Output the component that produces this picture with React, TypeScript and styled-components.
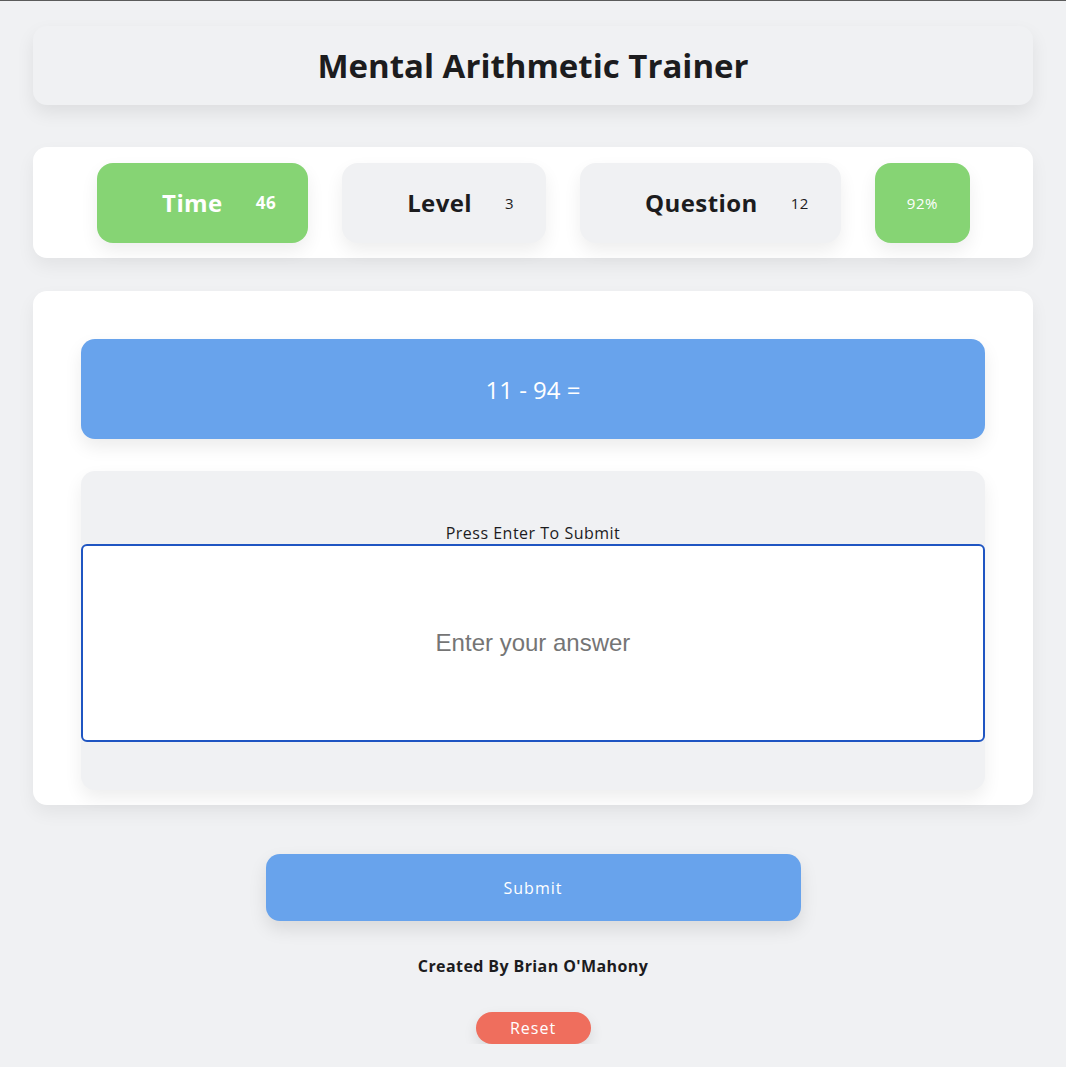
import React from 'react';
import styled, { createGlobalStyle, css } from 'styled-components';

const GlobalStyle = createGlobalStyle`
  html, body {
    margin: 0;
    padding: 0;
    background: #f0f1f3;
  }
  body {
    border-top: 1px solid #5b5b5b;
    font-family: "Open Sans", "Liberation Sans", sans-serif;
    color: #1c1c1e;
  }
  * { box-sizing: border-box; }
`;

const BLUE = '#68a3ec';
const GREEN = '#86d474';
const GREY = '#f0f1f3';

const Page = styled.div`
  display: flex;
  flex-direction: column;
  align-items: stretch;
  padding: 25px 33px 0;
`;

const Header = styled.header`
  height: 79px;
  background: ${GREY};
  border-radius: 14px;
  box-shadow: 0 8px 18px rgba(0, 0, 0, 0.08);
  display: flex;
  align-items: center;
  justify-content: center;

  h1 {
    margin: 0;
    font-size: 33px;
    font-weight: 700;
  }
`;

const Stats = styled.section`
  margin-top: 42px;
  height: 111px;
  background: #fff;
  border-radius: 14px;
  box-shadow: 0 8px 18px rgba(0, 0, 0, 0.06);
  display: flex;
  align-items: center;
  justify-content: center;
  gap: 34px;
  padding-left: 1px;
`;

const StatCard = styled.div<{ $green?: boolean }>`
  height: 80px;
  border-radius: 16px;
  padding: 0 32px;
  display: flex;
  align-items: center;
  background: ${(p) => (p.$green ? GREEN : GREY)};
  color: ${(p) => (p.$green ? '#fff' : '#1c1c1e')};
  box-shadow: 0 8px 18px rgba(0, 0, 0, 0.07);
`;

const StatLabel = styled.span`
  margin: 0 33px;
  font-size: 24px;
  font-weight: 700;
  letter-spacing: 0.4px;
`;

const StatValue = styled.span<{ $bold?: boolean }>`
  font-size: 15px;
  letter-spacing: 0.5px;
  ${(p) =>
    p.$bold &&
    css`
      font-weight: 700;
      font-size: 17px;
    `}
`;

const MainCard = styled.main`
  margin-top: 33px;
  background: #fff;
  border-radius: 14px;
  box-shadow: 0 8px 18px rgba(0, 0, 0, 0.06);
  padding: 48px 48px 15px;
  display: flex;
  flex-direction: column;
  gap: 32px;
`;

const QuestionBox = styled.div`
  height: 100px;
  border-radius: 14px;
  background: ${BLUE};
  color: #fff;
  font-size: 24px;
  display: flex;
  align-items: center;
  justify-content: center;
  box-shadow: 0 8px 18px rgba(0, 0, 0, 0.08);
`;

const AnswerBox = styled.div`
  background: ${GREY};
  border-radius: 14px;
  box-shadow: 0 8px 18px rgba(0, 0, 0, 0.07);
  padding: 51px 0 48px;
  display: flex;
  flex-direction: column;
  align-items: stretch;
`;

const Hint = styled.label`
  text-align: center;
  font-size: 16px;
  letter-spacing: 0.5px;
  line-height: 22px;
`;

const AnswerInput = styled.input`
  height: 198px;
  width: 100%;
  border: 2px solid #1f55c2;
  border-radius: 6px;
  background: #fff;
  font-family: "Liberation Sans", Arial, sans-serif;
  font-size: 24px;
  text-align: center;
  outline: none;
  caret-color: #000;

  &::placeholder {
    color: #757575;
  }
`;

const SubmitButton = styled.button`
  align-self: center;
  margin-top: 49px;
  width: 535px;
  height: 67px;
  border: 0;
  border-radius: 14px;
  background: ${BLUE};
  color: #fff;
  font-family: inherit;
  font-size: 16px;
  letter-spacing: 1px;
  box-shadow: 0 8px 18px rgba(0, 0, 0, 0.1);
  cursor: pointer;
`;

const Credit = styled.p`
  margin: 34px 0 0;
  text-align: center;
  font-size: 16px;
  letter-spacing: 0.4px;
  font-weight: 700;
`;

const ResetButton = styled.button`
  align-self: center;
  margin-top: 35px;
  width: 115px;
  height: 32px;
  border: 0;
  border-radius: 16px;
  background: #ef6e5d;
  color: #fff;
  font-family: inherit;
  font-size: 16px;
  letter-spacing: 1px;
  box-shadow: 0 6px 14px rgba(0, 0, 0, 0.1);
  cursor: pointer;
`;

export default function App() {
  return (
    <>
      <GlobalStyle />
      <Page>
        <Header>
          <h1>Mental Arithmetic Trainer</h1>
        </Header>

        <Stats>
          <StatCard $green>
            <StatLabel>Time</StatLabel>
            <StatValue $bold>46</StatValue>
          </StatCard>
          <StatCard>
            <StatLabel>Level</StatLabel>
            <StatValue>3</StatValue>
          </StatCard>
          <StatCard>
            <StatLabel>Question</StatLabel>
            <StatValue>12</StatValue>
          </StatCard>
          <StatCard $green>
            <StatValue>92%</StatValue>
          </StatCard>
        </Stats>

        <MainCard>
          <QuestionBox>11 - 94 =</QuestionBox>
          <AnswerBox>
            <Hint htmlFor="answer">Press Enter To Submit</Hint>
            <AnswerInput id="answer" type="text" placeholder="Enter your answer" autoFocus />
          </AnswerBox>
        </MainCard>

        <SubmitButton type="button">Submit</SubmitButton>
        <Credit>Created By Brian O'Mahony</Credit>
        <ResetButton type="button">Reset</ResetButton>
      </Page>
    </>
  );
}
